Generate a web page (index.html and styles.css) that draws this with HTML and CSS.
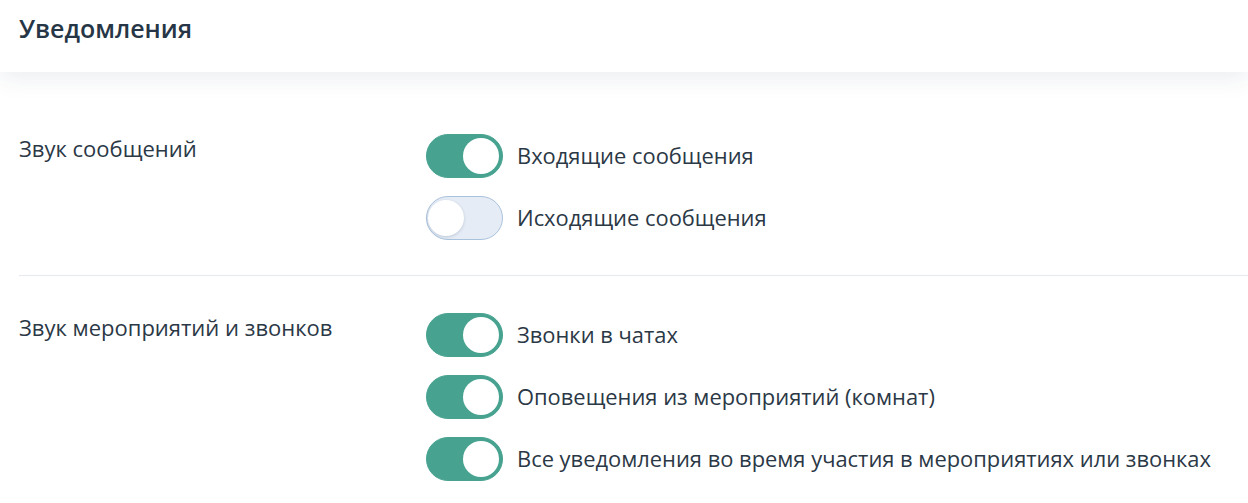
FILE: index.html
```html
<!DOCTYPE html>
<html lang="ru">
<head>
    <meta charset="UTF-8">
    <meta name="viewport" content="width=device-width, initial-scale=1.0">
    <title>Уведомления</title>
    <link rel="stylesheet" href="styles.css">
</head>
<body>
    <header class="page-header">
        <h1>Уведомления</h1>
    </header>

    <main class="settings">
        <section class="setting-group">
            <div class="group-title">Звук сообщений</div>
            <div class="options">
                <label class="option">
                    <input type="checkbox" checked>
                    <span class="switch"></span>
                    <span class="option-text">Входящие сообщения</span>
                </label>
                <label class="option">
                    <input type="checkbox">
                    <span class="switch"></span>
                    <span class="option-text">Исходящие сообщения</span>
                </label>
            </div>
        </section>

        <section class="setting-group">
            <div class="group-title">Звук мероприятий и звонков</div>
            <div class="options">
                <label class="option">
                    <input type="checkbox" checked>
                    <span class="switch"></span>
                    <span class="option-text">Звонки в чатах</span>
                </label>
                <label class="option">
                    <input type="checkbox" checked>
                    <span class="switch"></span>
                    <span class="option-text">Оповещения из мероприятий (комнат)</span>
                </label>
                <label class="option">
                    <input type="checkbox" checked>
                    <span class="switch"></span>
                    <span class="option-text">Все уведомления во время участия в мероприятиях или звонках</span>
                </label>
            </div>
        </section>
    </main>
</body>
</html>
```

FILE: styles.css
```css
body {
    margin: 0;
    font-family: "Open Sans", Arial, sans-serif;
    color: #2b3846;
    background: #fff;
    overflow: hidden;
}
.page-header {
    height: 72px;
    display: flex;
    align-items: center;
    padding: 0 19px;
    background: #fff;
    box-shadow: 0 6px 22px rgba(30, 50, 90, 0.09);
    position: relative;
}
h1 {
    margin: 0 0 16px;
    font-size: 25px;
    font-weight: 600;
    color: #263646;
}
.settings {
    padding: 26px 0 0 19px;
}
.setting-group {
    display: grid;
    grid-template-columns: 407px 1fr;
    padding: 36px 0 35px;
    border-bottom: 1px solid #e6e9f0;
}
.setting-group:last-child {
    border-bottom: none;
    padding-top: 37px;
}
.group-title {
    font-size: 22px;
    line-height: 30px;
    margin-top: -1px;
}
.options {
    display: flex;
    flex-direction: column;
    gap: 18px;
}
.option {
    display: flex;
    align-items: center;
    gap: 14px;
    cursor: pointer;
}
.option input {
    display: none;
}
.switch {
    width: 77px;
    height: 44px;
    box-sizing: border-box;
    border-radius: 22px;
    background: #e6ecf5;
    border: 1px solid #a9c2dc;
    position: relative;
    flex-shrink: 0;
}
.switch::after {
    content: "";
    position: absolute;
    top: 3px;
    left: 1px;
    width: 36px;
    height: 36px;
    border-radius: 50%;
    background: #fff;
    box-shadow: 0 1px 3px rgba(60, 90, 130, 0.25);
}
.option input:checked + .switch {
    background: #47a390;
    border-color: #47a390;
}
.option input:checked + .switch::after {
    left: auto;
    right: 3px;
    top: 3px;
    width: 36px;
    height: 36px;
    box-shadow: none;
}
.option-text {
    font-size: 21.9px;
    line-height: 30px;
    margin-top: -1px;
}
```
